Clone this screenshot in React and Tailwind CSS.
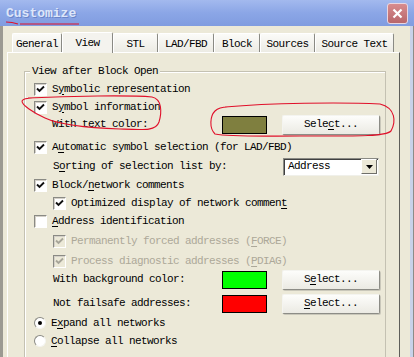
import React from "react";

const U = ({ children }) => <span className="underline underline-offset-[2px]">{children}</span>;

function Check({ checked = true, disabled = false }) {
  return (
    <span
      className={`w-[13px] h-[13px] shrink-0 flex items-center justify-center border border-t-[#8a8a84] border-l-[#8a8a84] border-r-white border-b-white ${
        disabled ? "bg-[#ece9d8]" : "bg-white"
      } shadow-[inset_1px_1px_0_#d4d0c8]`}
    >
      {checked && (
        <svg width="9" height="9" viewBox="0 0 9 9">
          <path
            d="M1 3.5 L3.5 6 L8 1.5"
            fill="none"
            stroke={disabled ? "#a7a599" : "#111"}
            strokeWidth="1.9"
          />
        </svg>
      )}
    </span>
  );
}

function Radio({ checked }) {
  return (
    <span className="w-[12px] h-[12px] shrink-0 rounded-full bg-white border border-t-[#8a8a84] border-l-[#8a8a84] border-r-[#f4f4f0] border-b-[#f4f4f0] flex items-center justify-center">
      {checked && <span className="w-[4px] h-[4px] rounded-full bg-black" />}
    </span>
  );
}

function Btn({ children }) {
  return (
    <div className="w-[98px] h-[20px] shrink-0 flex items-center justify-center bg-gradient-to-b from-[#fdfdfb] to-[#ebeae3] border border-t-[#f4f4f0] border-l-[#f4f4f0] border-r-[#8c8c86] border-b-[#8c8c86] rounded-[2px] shadow-[1px_1px_0_#c9c7ba]">
      {children}
    </div>
  );
}

const Swatch = ({ color }) => (
  <div className={`w-[45px] h-[18px] shrink-0 border border-black ${color}`} />
);

const tabs = [
  ["General", "w-[50px]"],
  ["View", "w-[51px]"],
  ["STL", "w-[45px]"],
  ["LAD/FBD", "w-[56px]"],
  ["Block", "w-[46px]"],
  ["Sources", "w-[55px]"],
  ["Source Text", "w-[79px]"],
];

export default function App() {
  return (
    <div className="relative w-[414px] h-[357px] overflow-hidden bg-[#ece9d8] font-['Liberation_Mono',monospace] text-[11px] tracking-[-0.6px] text-black leading-none">
      {/* title bar */}
      <div className="h-[26px] flex items-center justify-between bg-gradient-to-b from-[#a3b9ee] via-[#8ba6e6] to-[#809ce0] pl-[6px] pr-[6px]">
        <span className="text-[13px] tracking-[0px] font-bold text-[#dde6fa] [text-shadow:1px_1px_0_#6a84c8]">
          Customize
        </span>
        <div className="w-[21px] h-[21px] rounded-[3px] border border-[#e9d6e0] bg-gradient-to-b from-[#d88c8e] to-[#b8676b] flex items-center justify-center">
          <svg width="11" height="11" viewBox="0 0 11 11">
            <path d="M1.5 1.5 L9.5 9.5 M9.5 1.5 L1.5 9.5" stroke="#fff" strokeWidth="2.2" />
          </svg>
        </div>
      </div>

      {/* window body */}
      <div className="flex h-[331px]">
        <div className="w-[3px] bg-[#9c9a92] shrink-0" />
        <div className="flex-1 flex flex-col pl-[4px] pr-[10px] pt-[7px]">
          {/* tabs */}
          <div className="flex items-end h-[19px] pl-[5px]">
            {tabs.map(([t, w]) =>
              t === "View" ? (
                <div
                  key={t}
                  className={`${w} h-[21px] -mb-[1px] relative z-10 flex items-center justify-center pt-[1px] bg-[#f4f3ee] border-t border-l border-r border-t-white border-l-white border-r-[#8a8a84] rounded-t-[2px]`}
                >
                  {t}
                </div>
              ) : (
                <div
                  key={t}
                  className={`${w} h-[19px] flex items-center justify-center pt-[3px] bg-gradient-to-b from-[#fbfbf8] to-[#ecebe4] border-t border-l border-r border-t-white border-l-white border-r-[#8a8a84] rounded-t-[2px]`}
                >
                  {t}
                </div>
              )
            )}
          </div>

          {/* panel */}
          <div className="flex-1 border border-t-white border-l-white border-r-[#5e5e5a] border-b-[#5e5e5a] bg-[#ece9d8] pl-[16px] pr-[13px] pt-[18px]">
            <div className="relative h-[320px] border border-[#c4c1b2] shadow-[inset_1px_1px_0_#fff] pl-[9px] pt-[8px]">
              <span className="absolute -top-[6px] left-[5px] px-[2px] bg-[#ece9d8]">
                View after Block Open
              </span>

              <div className="flex flex-col">
                <div className="h-[18px] flex items-center gap-[5px]">
                  <Check />
                  <span>
                    S<U>y</U>mbolic representation
                  </span>
                </div>
                <div className="h-[18px] flex items-center gap-[5px]">
                  <Check />
                  <span>
                    S<U>y</U>mbol information
                  </span>
                </div>
                <div className="h-[17px] flex items-center pl-[18px]">
                  <span className="w-[170px] shrink-0">With text color:</span>
                  <Swatch color="bg-[#7f7f3f]" />
                  <div className="ml-[15px]">
                    <Btn>
                      Sele<U>c</U>t...
                    </Btn>
                  </div>
                </div>
                <div className="h-[18px] mt-[5px] flex items-center gap-[5px]">
                  <Check />
                  <span>
                    A<U>u</U>tomatic symbol selection (for LAD/FBD)
                  </span>
                </div>
                <div className="h-[19px] mt-[1px] flex items-center pl-[19px]">
                  <span className="w-[230px] shrink-0">
                    S<U>o</U>rting of selection list by:
                  </span>
                  <div className="w-[96px] h-[18px] flex items-center bg-white border border-t-[#8a8a84] border-l-[#8a8a84] border-r-[#f0f0ea] border-b-[#f0f0ea] shadow-[inset_1px_1px_0_#404040]">
                    <span className="flex-1 pl-[4px]">Address</span>
                    <div className="w-[16px] h-[15px] mr-[1px] flex items-center justify-center bg-[#ece9d8] border border-t-white border-l-white border-r-[#6f6f6a] border-b-[#6f6f6a]">
                      <svg width="7" height="4" viewBox="0 0 7 4">
                        <path d="M0 0 H7 L3.5 4 Z" fill="#000" />
                      </svg>
                    </div>
                  </div>
                </div>
                <div className="h-[18px] flex items-center gap-[5px]">
                  <Check />
                  <span>
                    Block/<U>n</U>etwork comments
                  </span>
                </div>
                <div className="h-[18px] flex items-center gap-[5px] pl-[19px]">
                  <Check />
                  <span>
                    Optimized display of network commen<U>t</U>
                  </span>
                </div>
                <div className="h-[18px] flex items-center gap-[5px]">
                  <Check checked={false} />
                  <span>
                    <U>A</U>ddress identification
                  </span>
                </div>
                <div className="h-[18px] mt-[2px] flex items-center gap-[5px] pl-[19px] text-[#aca899]">
                  <Check disabled />
                  <span>
                    Permanently forced addresses (<U>F</U>ORCE)
                  </span>
                </div>
                <div className="h-[18px] mt-[2px] flex items-center gap-[5px] pl-[19px] text-[#aca899]">
                  <Check disabled />
                  <span>
                    Process diagnostic addresses (<U>P</U>DIAG)
                  </span>
                </div>
                <div className="h-[19px] flex items-center pl-[19px]">
                  <span className="w-[169px] shrink-0">With background color:</span>
                  <Swatch color="bg-[#00ff00]" />
                  <div className="ml-[15px]">
                    <Btn>
                      S<U>e</U>lect...
                    </Btn>
                  </div>
                </div>
                <div className="h-[21px] mt-[4px] flex items-center pl-[19px]">
                  <span className="w-[169px] shrink-0">Not failsafe addresses:</span>
                  <Swatch color="bg-[#ff0000]" />
                  <div className="ml-[15px]">
                    <Btn>
                      <U>S</U>elect...
                    </Btn>
                  </div>
                </div>
                <div className="h-[18px] flex items-center gap-[5px]">
                  <Radio checked />
                  <span>
                    E<U>x</U>pand all networks
                  </span>
                </div>
                <div className="h-[18px] flex items-center gap-[5px]">
                  <Radio />
                  <span>
                    <U>C</U>ollapse all networks
                  </span>
                </div>
              </div>
            </div>
          </div>
        </div>
        <div className="w-[3px] bg-[#c9d2ea] shrink-0" />
        <div className="w-[1px] bg-[#8d8c88] shrink-0" />
      </div>

      {/* hand-drawn red annotations */}
      <svg
        className="absolute inset-0 pointer-events-none"
        width="414"
        height="357"
        viewBox="0 0 414 357"
      >
        <g fill="none" stroke="#e0102a" strokeWidth="1.1">
          <path d="M6 22 Q12 22 18 24 M20 24 L79 24" />
          <path d="M28 98 C70 96 130 95 152 97 C162 99 162 112 159 122 C156 131 145 130 120 129 C90 128 60 125 45 118 C32 112 22 105 22 101 C23 99 26 98 33 98" />
          <path d="M225 107 C270 103 340 102 380 104 C396 108 396 122 391 131 C385 137 350 136 300 136 C260 136 230 137 215 134 C209 128 210 116 215 111 C218 108 222 107 228 107" />
        </g>
      </svg>
    </div>
  );
}
